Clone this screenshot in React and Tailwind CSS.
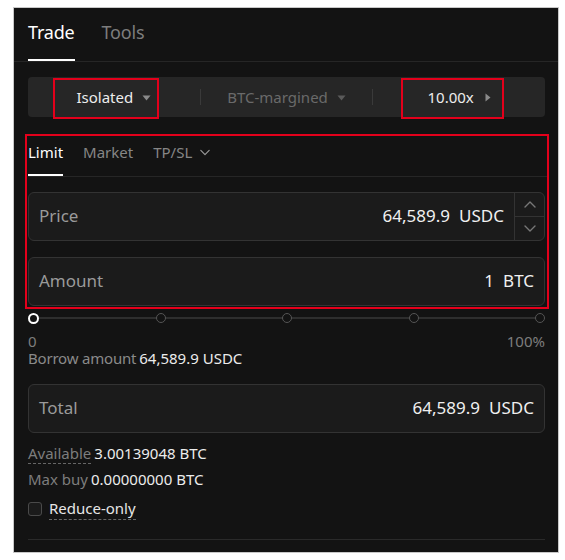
import React from "react";

function Caret({ dir = "down", className = "" }) {
  // small filled triangle used by the dropdown selectors
  return dir === "down" ? (
    <svg width="9" height="6" viewBox="0 0 9 6" className={className}>
      <path d="M0.5 0.5 L8.5 0.5 L4.5 5.5 Z" fill="currentColor" />
    </svg>
  ) : (
    <svg width="6" height="9" viewBox="0 0 6 9" className={className}>
      <path d="M0.5 0.5 L5.5 4.5 L0.5 8.5 Z" fill="currentColor" />
    </svg>
  );
}

function Chevron({ up = false, className = "" }) {
  return (
    <svg width="12" height="7" viewBox="0 0 12 7" className={className}>
      <path
        d={up ? "M1 6 L6 1 L11 6" : "M1 1 L6 6 L11 1"}
        fill="none"
        stroke="currentColor"
        strokeWidth="1.4"
        strokeLinecap="round"
        strokeLinejoin="round"
      />
    </svg>
  );
}

function Field({ label, value, unit, stepper = false }) {
  return (
    <div className="h-[49px] w-full rounded-[6px] border border-[#333333] bg-[#1b1b1b] flex items-stretch">
      <div className="flex-1 flex items-center justify-between pl-[10px] pr-[10px] -mt-[1px]">
        <span className="text-[17px] text-[#9a9a9a]">{label}</span>
        <span className="text-[17px] text-[#f0f0f0] flex gap-[9px]">
          <span>{value}</span>
          <span>{unit}</span>
        </span>
      </div>
      {stepper && (
        <div className="w-[30px] border-l border-[#333333] flex flex-col">
          <div className="flex-1 flex items-center justify-center border-b border-[#333333] text-[#777777]">
            <Chevron up />
          </div>
          <div className="flex-1 flex items-center justify-center text-[#777777]">
            <Chevron />
          </div>
        </div>
      )}
    </div>
  );
}

export default function App() {
  return (
    <div className="w-[565px] h-[560px] bg-white pt-[7px] pl-[13px] font-['Noto_Sans','Open_Sans',sans-serif]">
      <div className="w-[546px] h-[546px] border border-[#c8c8c8] bg-[#131313] flex flex-col">
        {/* Trade / Tools tabs */}
        <div className="h-[54px] border-b border-[#262626] flex items-stretch gap-[27px] px-[14px]">
          <div className="flex flex-col justify-end">
            <span className="text-[18px] leading-[24px] text-white mb-[15px] tracking-[-0.2px]">Trade</span>
            <span className="h-[2px] bg-white" />
          </div>
          <div className="flex flex-col justify-end">
            <span className="text-[18px] leading-[24px] text-[#7d7d7d] mb-[17px] tracking-[-0.2px]">Tools</span>
          </div>
        </div>

        {/* margin mode / leverage bar */}
        <div className="relative mt-[15px] ml-[14px] w-[517px] h-[40px] rounded-[4px] bg-[#262626] flex items-center">
          <div className="flex-1 flex items-center justify-center gap-[9px] text-[15px] text-[#ededed]">
            <span>Isolated</span>
            <Caret className="text-[#8a8a8a] mt-[1px]" />
          </div>
          <div className="w-px h-[16px] bg-[#3a3a3a]" />
          <div className="flex-1 flex items-center justify-center gap-[9px] text-[15px] text-[#6a6a6a]">
            <span>BTC-margined</span>
            <Caret className="text-[#5a5a5a] mt-[1px]" />
          </div>
          <div className="w-px h-[16px] bg-[#3a3a3a]" />
          <div className="flex-1 flex items-center justify-center gap-[11px] text-[15px] text-[#ededed]">
            <span>10.00x</span>
            <Caret dir="right" className="text-[#8a8a8a]" />
          </div>
          <div className="absolute left-[25px] top-[1px] w-[106px] h-[41px] border-2 border-[#e3001b]" />
          <div className="absolute left-[373px] top-[1px] w-[103px] h-[41px] border-2 border-[#e3001b]" />
        </div>

        {/* order type + inputs */}
        <div className="mt-[17px] ml-[11px] w-[524px] border-2 border-[#e3001b] pl-[1px] pr-[2px] pb-[1px]">
          <div className="h-[41px] border-b border-[#262626] flex items-stretch gap-[20px] -mr-[2px]">
            <div className="flex flex-col justify-end">
              <span className="text-[15px] leading-[22px] text-white mb-[11px]">Limit</span>
              <span className="h-[2px] bg-white" />
            </div>
            <div className="flex flex-col justify-end">
              <span className="text-[15px] leading-[22px] text-[#868686] mb-[13px]">Market</span>
            </div>
            <div className="flex flex-col justify-end">
              <span className="text-[15px] leading-[22px] text-[#868686] mb-[13px] flex items-center gap-[8px]">
                TP/SL
                <Chevron className="w-[10px] text-[#9a9a9a]" />
              </span>
            </div>
          </div>
          <div className="mt-[15px] flex flex-col gap-[16px]">
            <Field label="Price" value="64,589.9" unit="USDC" stepper />
            <Field label="Amount" value="1" unit="BTC" />
          </div>
        </div>

        {/* percentage slider */}
        <div className="ml-[14px] w-[517px] mt-[3px] h-[12px] relative flex items-center justify-between">
          <div className="absolute left-[5px] right-[5px] top-[5px] h-[2px] bg-[#2e2e2e]" />
          <span className="relative w-[11px] h-[11px] rounded-full border-2 border-white bg-[#131313]" />
          <span className="relative w-[10px] h-[10px] rounded-full border border-[#555555] bg-[#131313]" />
          <span className="relative w-[10px] h-[10px] rounded-full border border-[#555555] bg-[#131313]" />
          <span className="relative w-[10px] h-[10px] rounded-full border border-[#555555] bg-[#131313]" />
          <span className="relative w-[10px] h-[10px] rounded-full border border-[#555555] bg-[#131313]" />
        </div>

        <div className="ml-[14px] w-[517px] mt-[9px] flex justify-between text-[15px] leading-[16px] text-[#7d7d7d]">
          <span>0</span>
          <span>100%</span>
        </div>
        <div className="ml-[14px] text-[15px] leading-[18px] flex gap-[3px]">
          <span className="text-[#8a8a8a] tracking-[-0.2px]">Borrow amount</span>
          <span className="text-[#ececec]">64,589.9 USDC</span>
        </div>

        <div className="ml-[14px] w-[517px] mt-[17px]">
          <Field label="Total" value="64,589.9" unit="USDC" />
        </div>

        <div className="ml-[14px] mt-[10px] text-[15px] leading-[20px] flex gap-[3px]">
          <span className="text-[#7d7d7d] border-b border-dashed border-[#666666] leading-[20px]">Available</span>
          <span className="text-[#ececec]">3.00139048 BTC</span>
        </div>
        <div className="ml-[14px] mt-[5px] text-[15px] leading-[20px] flex gap-[3px]">
          <span className="text-[#7d7d7d]">Max buy</span>
          <span className="text-[#ececec]">0.00000000 BTC</span>
        </div>
        <div className="ml-[14px] mt-[9px] flex items-center gap-[7px]">
          <span className="w-[14px] h-[14px] rounded-[3px] border border-[#4a4a4a] bg-[#1b1b1b]" />
          <span className="text-[15px] leading-[21px] text-[#e6e6e6] border-b border-dashed border-[#666666]">
            Reduce-only
          </span>
        </div>

        <div className="ml-[14px] w-[517px] mt-[19px] h-px bg-[#2a2a2a]" />
      </div>
    </div>
  );
}
